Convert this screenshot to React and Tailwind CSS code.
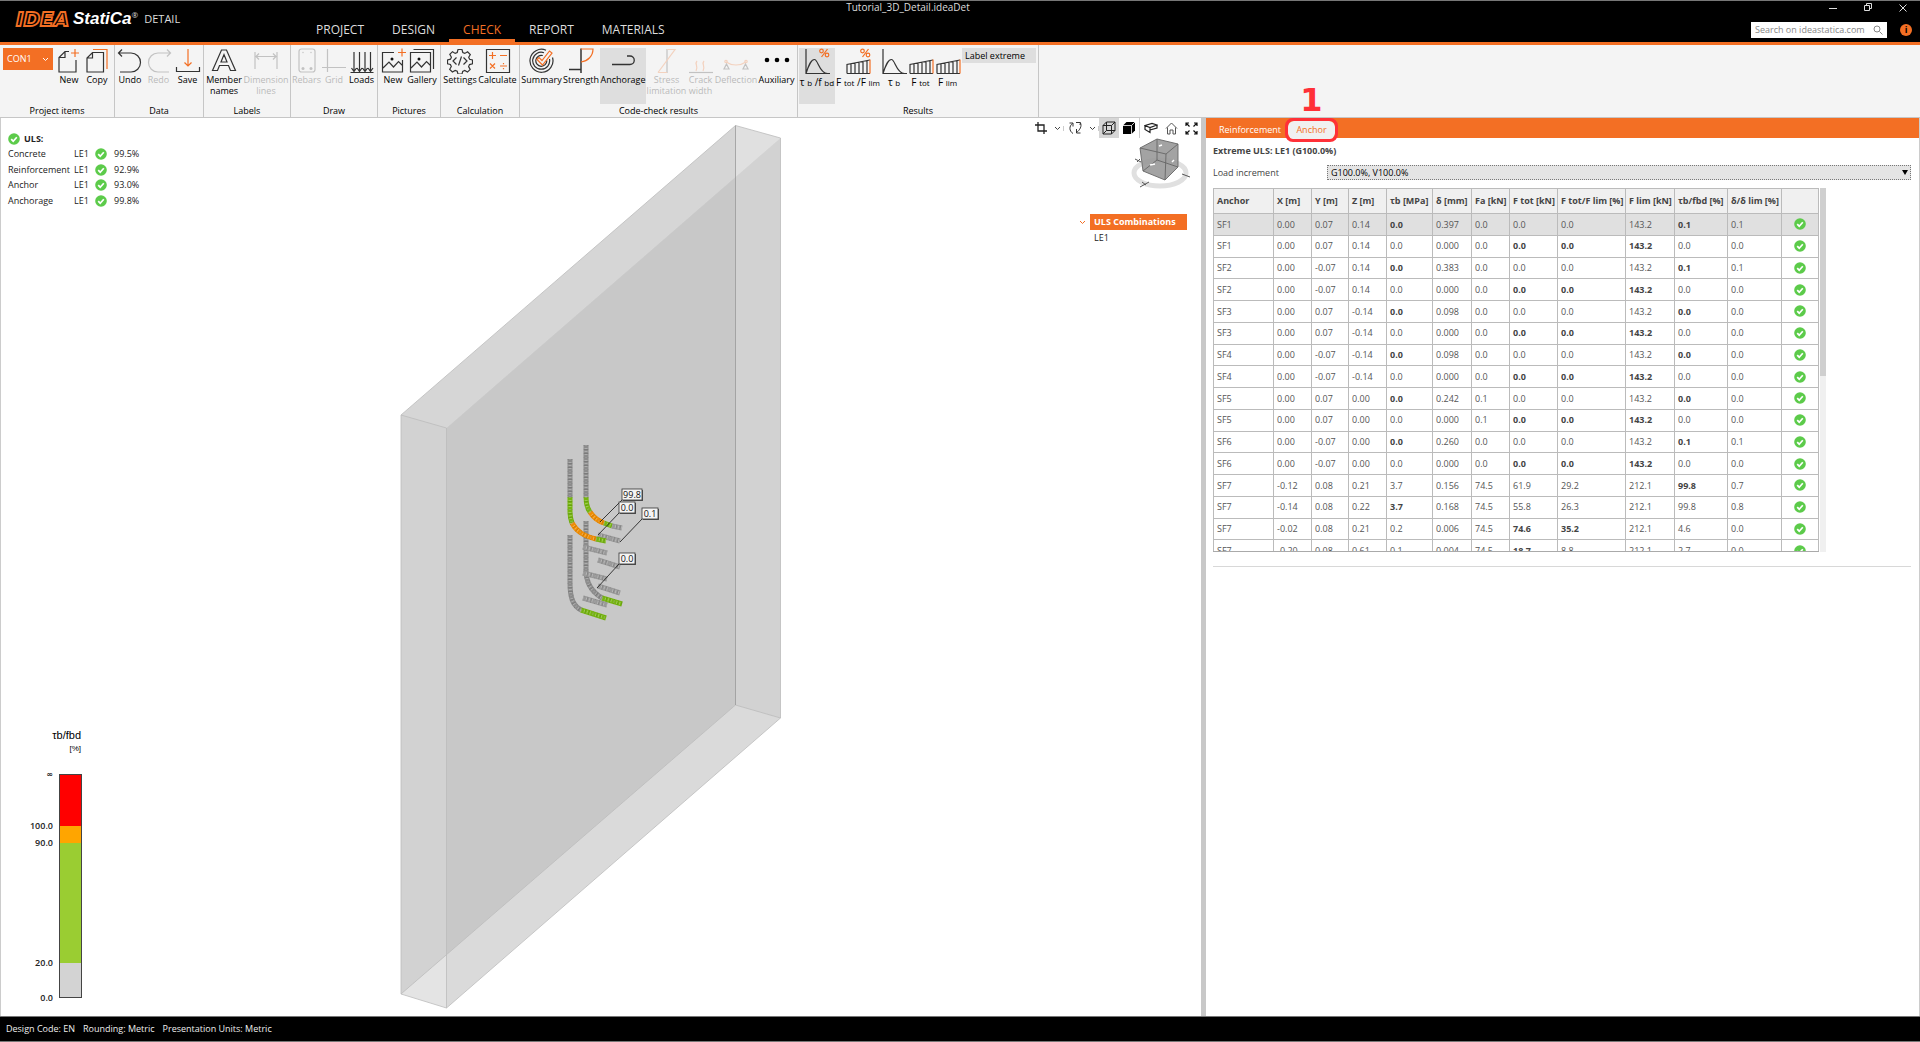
import React, { useState } from "react";

const ORANGE = "#f36f24";

const Icon = ({ children, w = 26, h = 26, className = "" }) => (
  <svg
    width={w}
    height={h}
    viewBox={`0 0 ${w} ${h}`}
    fill="none"
    stroke="#333"
    strokeWidth="1.2"
    aria-hidden="true"
    className={`shrink-0 ${className}`}
  >
    {children}
  </svg>
);

const icons = {
  newItem: (
    <Icon>
      <path d="M20 12v12H3V9.5L9 3.5h4M9 3.5v6H3" />
      <path d="M15 5h8M19 1v8" stroke={ORANGE} />
    </Icon>
  ),
  copy: (
    <Icon>
      <path d="M8.500 4.500h11v19.500H3V10zM8.500 4.500V10H3" />
      <path d="M9 1.500h14V21" stroke={ORANGE} />
    </Icon>
  ),
  undo: (
    <Icon>
      <path d="M1.500 5H14a9.500 9.500 0 0 1 0 19H3M5 1.500L1.500 5 5 8.500" />
    </Icon>
  ),
  redo: (
    <Icon>
      <path d="M24.500 5H12a9.500 9.500 0 0 0 0 19h11M21 1.500L24.500 5 21 8.500" />
    </Icon>
  ),
  save: (
    <Icon>
      <path d="M1.500 19v4.500h23V19" />
      <path d="M13 1v17M9.500 14.500L13 18l3.500-3.500" stroke={ORANGE} />
    </Icon>
  ),
  member: (
    <Icon>
      <path d="M1.500 22.500L10.500 2h5l9 20.500h-5l-2-5h-9l-2 5zM10 14h6l-3-7.500z" />
    </Icon>
  ),
  dimension: (
    <Icon>
      <path d="M2 4v17M24 4v17M3 8.500h20M6 5.500L3 8.500l3 3M20 5.500l3 3-3 3" />
    </Icon>
  ),
  rebars: (
    <Icon>
      <rect x="5" y="1" width="16" height="23" rx="2.500" />
      <g fill="#333" stroke="none">
        <circle cx="9" cy="20.500" r="1.500" />
        <circle cx="17" cy="20.500" r="1.500" />
        <circle cx="9" cy="4.500" r=".7" />
        <circle cx="17" cy="4.500" r=".7" />
      </g>
    </Icon>
  ),
  grid: (
    <Icon>
      <path d="M6.500 1v23M1 19.500h24" />
    </Icon>
  ),
  loads: (
    <Icon>
      <path d="M1.500 24.500h23M5 4v19M10.500 4v19M16 4v19M21.500 4v19M2.500 20L5 23.500 7.500 20M8 20l2.500 3.500L13 20M13.500 20l2.500 3.500 2.500-3.500M19 20l2.500 3.500L24 20" />
    </Icon>
  ),
  picture: (
    <Icon>
      <path d="M14 4.500H2.500V24h20V12M3 20l6-6 4.500 5 5-5.500 4 4" />
      <circle cx="12" cy="11" r="1.500" fill="#111" stroke="none" />
      <path d="M18 4.500h8M22 .5v8" stroke={ORANGE} />
    </Icon>
  ),
  gallery: (
    <Icon>
      <path d="M1.500 4.500h20V24h-20zM4.500 1.500h20V21M2 20l6-6 4.500 5 5-5.500 4 4" />
      <circle cx="10" cy="11" r="1.500" fill="#111" stroke="none" />
    </Icon>
  ),
  settings: (
    <Icon>
      <path d="M11 1.500h4l.8 3 2 .9 2.800-1.600 2.700 2.700-1.600 2.800.9 2 2.900.7v3.800l-3 .8-.9 2 1.600 2.800-2.700 2.700-2.800-1.600-2 .9-.7 2.700h-4l-.8-2.800-2-.9-2.800 1.600-2.700-2.700 1.600-2.800-.9-2-2.900-.7v-3.900l3-.7.9-2-1.600-2.800 2.700-2.700L8.200 5.400l2-.9z" />
      <path d="M9.500 9.500L6 13l3.500 3.500M16.500 9.500L20 13l-3.500 3.500M14.500 8.500l-3 9" />
    </Icon>
  ),
  calculate: (
    <Icon>
      <path d="M1.500 1.500h23v23h-23z" />
      <path d="M4 7.500h7M7.500 4v7M15 7.500h7M5 15.500l5 5M10 15.500l-5 5M15 18h7M18.500 15v1.200M18.500 20v1.200" stroke={ORANGE} />
    </Icon>
  ),
  summary: (
    <Icon>
      <path d="M23.500 9.500A11.500 11.500 0 1 1 17 2.200M20.500 11A8.500 8.500 0 1 1 15 4.700M17.800 12.500a5.500 5.500 0 1 1-4-5" />
      <path d="M8 11.500l2-2 3 3L20.500 3l2.500 2-9.500 12z" stroke={ORANGE} />
    </Icon>
  ),
  strength: (
    <Icon>
      <path d="M13 .5V25M1 21.500h12" strokeWidth="1.500" />
      <path d="M13 1h12c0 7-5 12-12 13" stroke={ORANGE} />
    </Icon>
  ),
  anchorage: (
    <Icon>
      <path d="M2 16.500h18a4 4 0 0 0 0-8.500h-3" strokeWidth="1.300" />
    </Icon>
  ),
  stress: (
    <Icon>
      <path d="M13 1v24" />
      <path d="M4 24.500L21 1.500H13M4 24.500h9" stroke={ORANGE} />
    </Icon>
  ),
  crack: (
    <Icon>
      <path d="M1 24.500h24" />
      <path d="M9 13c-3 3 2 5-1 10M16 13c-3 3 2 5-1 10" stroke={ORANGE} />
    </Icon>
  ),
  deflection: (
    <Icon>
      <path d="M1 21h5l-2.500-5zM20 21h5l-2.500-5z" />
      <path d="M3 14c6 4 14 4 20 0" stroke={ORANGE} />
      <circle cx="3" cy="13.500" r="1.200" stroke={ORANGE} />
      <circle cx="23" cy="13.500" r="1.200" stroke={ORANGE} />
    </Icon>
  ),
  auxiliary: (
    <Icon>
      <g fill="#000" stroke="none">
        <circle cx="3" cy="12" r="2.300" />
        <circle cx="13" cy="12" r="2.300" />
        <circle cx="23" cy="12" r="2.300" />
      </g>
    </Icon>
  ),
};

const Percent = () => (
  <g stroke={ORANGE}>
    <circle cx="17.500" cy="3" r="1.800" />
    <circle cx="23" cy="7" r="1.800" />
    <path d="M23.500 1l-6 8" />
  </g>
);

const CurveIcon = ({ percent }) => (
  <Icon>
    <path d="M2 1v24.500h24M2 25.500c3-9 5-14 8.500-14s5 14 13 14" />
    {percent && <Percent />}
  </Icon>
);

const BarsIcon = ({ percent }) => (
  <Icon>
    <path d="M2 25.500V16.500L25 12M2 25.500h23M6 25.500V16M10 25.500V15.200M14 25.500v-11M18 25.500V13.500M22 25.500V12.700" />
    <path d="M25 11.500v14" stroke={ORANGE} />
    {percent && <Percent />}
  </Icon>
);

const Sub = ({ children }) => <span className="text-[8px]">{children}</span>;

const groups = [
  {
    label: "Project items",
    cls: "w-[115px]",
    items: [
      { name: "New", icon: icons.newItem, cls: "w-7" },
      { name: "Copy", icon: icons.copy, cls: "w-7" },
    ],
  },
  {
    label: "Data",
    cls: "w-[89px]",
    items: [
      { name: "Undo", icon: icons.undo, cls: "w-7" },
      { name: "Redo", icon: icons.redo, cls: "w-[29px]", disabled: true },
      { name: "Save", icon: icons.save, cls: "w-[29px]" },
    ],
  },
  {
    label: "Labels",
    cls: "w-[87px]",
    items: [
      { name: "Member names", icon: icons.member, cls: "w-[38px]" },
      { name: "Dimension lines", icon: icons.dimension, cls: "w-[46px]", disabled: true },
    ],
  },
  {
    label: "Draw",
    cls: "w-[87px]",
    items: [
      { name: "Rebars", icon: icons.rebars, cls: "w-[29px]", disabled: true },
      { name: "Grid", icon: icons.grid, cls: "w-[26px]", disabled: true },
      { name: "Loads", icon: icons.loads, cls: "w-[29px]" },
    ],
  },
  {
    label: "Pictures",
    cls: "w-[63px]",
    items: [
      { name: "New", icon: icons.picture, cls: "w-7" },
      { name: "Gallery", icon: icons.gallery, cls: "w-[30px]" },
    ],
  },
  {
    label: "Calculation",
    cls: "w-[79px]",
    items: [
      { name: "Settings", icon: icons.settings, cls: "w-[36px]" },
      { name: "Calculate", icon: icons.calculate, cls: "w-[39px]" },
    ],
  },
  {
    label: "Code-check results",
    cls: "w-[278px]",
    items: [
      { name: "Summary", icon: icons.summary, cls: "w-[41px]" },
      { name: "Strength", icon: icons.strength, cls: "w-[38px]" },
      { name: "Anchorage", icon: icons.anchorage, cls: "w-[46px]", active: true },
      { name: "Stress limitation", icon: icons.stress, cls: "w-[41px]", disabled: true },
      { name: "Crack width", icon: icons.crack, cls: "w-[27px]", disabled: true },
      { name: "Deflection", icon: icons.deflection, cls: "w-[44px]", disabled: true },
      { name: "Auxiliary", icon: icons.auxiliary, cls: "w-[37px]" },
    ],
  },
];

const resultItems = [
  { id: "ratio", icon: <CurveIcon percent />, cls: "w-[36px]", active: true, label: <>τ <Sub>b</Sub> /f <Sub>bd</Sub></> },
  { id: "force", icon: <BarsIcon percent />, cls: "w-[46px]", label: <>F <Sub>tot</Sub> /F <Sub>lim</Sub></> },
  { id: "tau", icon: <CurveIcon />, cls: "w-[26px]", label: <>τ <Sub>b</Sub></> },
  { id: "ftot", icon: <BarsIcon />, cls: "w-[27px]", label: <>F <Sub>tot</Sub></> },
  { id: "flim", icon: <BarsIcon />, cls: "w-[27px]", label: <>F <Sub>lim</Sub></> },
];

const Check = () => (
  <svg width="12" height="12" viewBox="0 0 12 12" role="img" aria-label="OK" className="block">
    <circle cx="6" cy="6" r="5.800" fill="#5ccb4a" />
    <path d="M3.200 6.200l2 2 3.600-4" fill="none" stroke="#fff" strokeWidth="1.700" />
  </svg>
);

const Header = () => {
  const tabs = ["PROJECT", "DESIGN", "CHECK", "REPORT", "MATERIALS"];

  return (
    <header className="relative flex h-[45px] shrink-0 border-t border-t-[#777] border-b-[3px] border-b-[#f36f24] bg-black text-[#ddd]">
      <div className="absolute inset-x-0 top-0 flex h-3">
        <h1 className="flex-1 text-center text-[10px] leading-3">Tutorial_3D_Detail.ideaDet</h1>
        <div className="flex w-[104px] justify-between pl-3 pr-3">
          <button aria-label="Minimize">
            <svg width="10" height="10" stroke="#ddd"><path d="M1 6.500h8" /></svg>
          </button>
          <button aria-label="Restore">
            <svg width="10" height="10" fill="none" stroke="#ddd"><path d="M1.500 3.500h5v5h-5zM3.500 3.500v-2h5v5h-2" /></svg>
          </button>
          <button aria-label="Close">
            <svg width="10" height="10" stroke="#ddd"><path d="M1.500 2.500l7 7M8.500 2.500l-7 7" /></svg>
          </button>
        </div>
      </div>

      <div className="flex h-9 w-[302px] items-center pl-4">
        <svg width="57" height="28" viewBox="0 0 57 28" className="shrink-0 overflow-visible">
          <text
            x="0"
            y="21"
            fontFamily="DejaVu Sans"
            fontSize="20"
            fontWeight="700"
            fontStyle="italic"
            fill="#000"
            stroke={ORANGE}
            strokeWidth="1.800"
          >
            IDEA
          </text>
        </svg>
        <span className="font-['Liberation_Sans'] text-[17px] font-bold italic text-white">StatiCa</span>
        <sup className="text-[8px]">®</sup>
        <span className="ml-[6px] text-[11px]">DETAIL</span>
      </div>

      <nav className="flex items-end">
        {tabs.map((tab) => (
          <a
            key={tab}
            href={`#${tab.toLowerCase()}`}
            className={
              tab === "CHECK"
                ? "h-6 border-b-[3px] border-[#f36f24] px-[14px] text-[12px] leading-6 text-[#f36f24]"
                : "h-6 px-[14px] text-[12px] leading-6"
            }
          >
            {tab}
          </a>
        ))}
      </nav>

      <div className="ml-auto flex items-end gap-[13px] pr-2 pb-1">
        <label className="flex h-4 w-[136px] items-center bg-white px-1">
          <input
            type="text"
            aria-label="Search"
            placeholder="Search on ideastatica.com"
            className="w-full min-w-0 text-[9px] leading-4 text-black outline-none placeholder:text-[#888]"
          />
          <svg width="10" height="10" fill="none" stroke="#888" className="shrink-0">
            <circle cx="4" cy="4" r="3" />
            <path d="M6.500 6.500L9.500 9.500" />
          </svg>
        </label>
        <button className="mb-[2px] size-3 rounded-full bg-[#f36f24] text-[9px] font-bold leading-3 text-black">i</button>
      </div>
    </header>
  );
};

const RibbonItem = ({ item }) => (
  <button
    disabled={item.disabled}
    className={`flex h-14 shrink-0 flex-col items-center text-[9px] leading-[11px] ${item.cls} ${
      item.active ? "bg-[#dedede]" : ""
    } ${item.disabled ? "opacity-25" : ""}`}
  >
    {item.icon}
    <span>{item.name}</span>
  </button>
);

const Ribbon = () => (
  <div className="flex h-[73px] shrink-0 border-b border-[#c6c6c6] bg-[#f4f4f4] text-black">
    {groups.map((group, i) => (
      <section key={group.label} className={`flex shrink-0 flex-col border-r border-[#c6c6c6] pt-[3px] ${group.cls}`}>
        <div className="flex pl-px">
          {i === 0 && (
            <button className="mx-[2px] flex h-[22px] w-[50px] items-center justify-between bg-[#f36f24] px-1 text-[9px] text-white">
              CON1
              <svg width="7" height="5" fill="none" stroke="#fff"><path d="M1 1l2.500 2.500L6 1" /></svg>
            </button>
          )}
          {group.items.map((item) => (
            <RibbonItem key={item.name} item={item} />
          ))}
        </div>
        <h2 className="text-center text-[9px] leading-[13px]">{group.label}</h2>
      </section>
    ))}
    <section className="flex w-[241px] shrink-0 flex-col border-r border-[#c6c6c6] pt-[3px]">
      <div className="flex items-start pl-px">
        {resultItems.map((item) => (
          <button
            key={item.id}
            className={`flex h-14 shrink-0 flex-col items-center whitespace-nowrap text-[10px] leading-4 ${item.cls} ${
              item.active ? "bg-[#dedede]" : ""
            }`}
          >
            {item.icon}
            <span>{item.label}</span>
          </button>
        ))}
        <button className="ml-px h-[15px] w-[74px] bg-[#dedede] pl-[3px] text-left text-[9px]">Label extreme</button>
      </div>
      <h2 className="text-center text-[9px] leading-[13px]">Results</h2>
    </section>
  </div>
);

const checks = [
  ["Concrete", "99.5%"],
  ["Reinforcement", "92.9%"],
  ["Anchor", "93.0%"],
  ["Anchorage", "99.8%"],
];

// reinforcement bars: path and colour of each stressed segment
const bars = [
  ["M586 327V379", "#8c8c8c"],
  ["M586 379C586 386 587 390 590 394", "#76b510"],
  ["M590 394C594 400 598 403 604 405", "#f08c00"],
  ["M604 405L612 408", "#76b510"],
  ["M612 408L622 410", "#999"],
  ["M586 403V452C586 466 592 474 602 480", "#8c8c8c"],
  ["M602 480L622 486", "#76b510"],
  ["M598 417L620 423", "#999"],
  ["M583 429L607 435", "#999"],
  ["M598 442L620 449", "#999"],
  ["M583 455L607 461", "#999"],
  ["M598 468L620 475", "#999"],
  ["M583 480L607 487", "#999"],
  ["M570 341V379", "#8c8c8c"],
  ["M570 379V394C570 399 571 402 572 405", "#76b510"],
  ["M572 405C577 414 584 418 596 421", "#f08c00"],
  ["M596 421L606 423", "#76b510"],
  ["M570 417V465C570 482 574 488 581 492", "#8c8c8c"],
  ["M581 492L606 500", "#76b510"],
];

const callouts = [
  { x: 622, y: 371, w: 20, text: "99.8", line: "M622 382L600 404" },
  { x: 619, y: 384, w: 16, text: "0.0", line: "M619 395L598 417" },
  { x: 642, y: 390, w: 16, text: "0.1", line: "M642 401L620 424" },
  { x: 619, y: 435, w: 16, text: "0.0", line: "M619 446L597 470" },
];

const Scene = () => (
  <svg viewBox="1 0 1200 898" className="absolute inset-0 h-full w-full" role="img" aria-label="3D model">
    <g fill="#000">
      <path d="M401 297L735.500 7.500V587L401 876z" fillOpacity=".12" />
      <path d="M735.500 7.500L780.500 20V600L735.500 587z" fillOpacity=".08" />
      <path d="M401 297L446.500 310V890L401 876z" fillOpacity=".064" />
      <path d="M401 297L735.500 7.500L780.500 20L446.500 310z" fillOpacity=".042" />
      <path d="M401 876L735.500 587L780.500 600L446.500 890z" fillOpacity=".042" />
      <path d="M446.500 310L780.500 20V600L446.500 890z" fillOpacity=".105" />
    </g>
    <g fill="none" stroke="#bbb" strokeWidth=".8">
      <path d="M401 297L735.500 7.500L780.500 20V600L446.500 890L401 876zM401 297L446.500 310V890M735.500 587L780.500 600M401 876L735.500 587" />
      <path d="M735.500 7.500V587" stroke="#999" />
    </g>
    <g fill="none">
      {bars.map(([d, color]) => (
        <g key={d}>
          <path d={d} stroke={color} strokeWidth="5" />
          <path d={d} stroke="#fff" strokeOpacity=".3" strokeWidth="3" strokeDasharray="1 2" />
          <path d={d} stroke="#000" strokeOpacity=".12" strokeWidth="5" strokeDasharray="1 3" />
        </g>
      ))}
      {callouts.map((c) => (
        <path key={c.line} d={c.line} stroke="#111" strokeWidth=".8" />
      ))}
    </g>
    {callouts.map((c) => (
      <g key={c.line}>
        <rect x={c.x + 1} y={c.y + 1} width={c.w} height="11" fill="#555" />
        <rect x={c.x} y={c.y} width={c.w} height="11" fill="#f4f4f4" stroke="#333" strokeWidth=".8" />
        <text x={c.x + c.w / 2} y={c.y + 9} textAnchor="middle" fontSize="9" fill="#111">
          {c.text}
        </text>
      </g>
    ))}
  </svg>
);

const Legend = () => (
  <svg
    width="90"
    height="290"
    viewBox="1 0 90 290"
    className="absolute bottom-0 left-0"
    role="img"
    aria-label="Stress scale"
    fontSize="9"
    textAnchor="end"
  >
    <text x="81" y="13" fontSize="11" fontFamily="Liberation Sans">τb/fbd</text>
    <text x="81" y="25" fontSize="8" fontFamily="Liberation Sans">[%]</text>
    <rect x="59" y="48" width="23" height="52" fill="#f00" />
    <rect x="59" y="100" width="23" height="17" fill="#ffa500" />
    <rect x="59" y="117" width="23" height="120" fill="#9acd32" />
    <rect x="59" y="237" width="23" height="35" fill="#d3d3d3" />
    <rect x="59.500" y="48.500" width="22" height="223" fill="none" stroke="#444" />
    <g fontWeight="600" fill="#222">
      <text x="53" y="51" fontSize="8" fontFamily="DejaVu Sans">∞</text>
      <text x="53" y="103">100.0</text>
      <text x="53" y="120">90.0</text>
      <text x="53" y="240">20.0</text>
      <text x="53" y="275">0.0</text>
    </g>
  </svg>
);

const Chevron = ({ color = "#444" }) => (
  <svg width="7" height="5" fill="none" stroke={color} aria-hidden="true"><path d="M1 1l2.500 2.500L6 1" /></svg>
);

const ViewToolbar = () => (
  <div className="flex h-5 items-center">
    <button aria-label="Section" className="flex w-5 justify-center">
      <svg width="12" height="12" fill="none" stroke="#222" strokeWidth="1.300"><path d="M0 3h9v9M3 0v9h9" /></svg>
    </button>
    <button aria-label="Section options" className="flex w-[13px] justify-center border-r border-[#ccc]"><Chevron /></button>
    <button aria-label="Rotate" className="flex w-[22px] justify-center">
      <svg width="14" height="14" fill="none" stroke="#333">
        <path d="M5 12.500C1 10 1 5 4.500 2.500M1.500 2h3.500v3.500M8 1.500h4.500L12 4M12.500 2C14 5 12 9 8.500 11.500M8.500 8v4h4" />
      </svg>
    </button>
    <button aria-label="Rotate options" className="flex w-[13px] justify-center border-r border-[#ccc]"><Chevron /></button>
    <button aria-label="Wireframe" className="flex size-5 items-center justify-center bg-[#d6d6d6]">
      <svg width="14" height="14" fill="none" stroke="#222">
        <path d="M1 4.500h8.500V13H1zM4.500 1H13v8.500H4.500zM1 4.500L4.500 1M9.500 4.500L13 1M9.500 13L13 9.500M1 13l3.500-3.500" />
      </svg>
    </button>
    <button aria-label="Solid" className="flex h-5 w-[21px] items-center justify-center border-r border-[#ccc]">
      <svg width="14" height="14">
        <path d="M1 4.500L4.500 1H13v8.500L9.500 13H1z" fill="#000" />
        <path d="M1 4.500h8.500V13M9.500 4.500L13 1" fill="none" stroke="#fff" strokeWidth=".8" />
      </svg>
    </button>
    <button aria-label="Clip box" className="flex w-[22px] justify-center">
      <svg width="14" height="12" fill="none" stroke="#222" strokeWidth="1.200">
        <path d="M1 3.500L8 1.500l5 1.500-7 2.500zM1 3.500v4l5 3v-5M6 10.500V8L13 6V3" />
      </svg>
    </button>
    <button aria-label="Home" className="flex w-[19px] justify-center">
      <svg width="13" height="13" fill="none" stroke="#555">
        <path d="M1 6.500L6.500 1 12 6.500M2.500 5.500v6.500H5V8h3v4h2.500V5.500" />
      </svg>
    </button>
    <button aria-label="Fit" className="flex w-5 justify-center">
      <svg width="13" height="13" fill="none" stroke="#111" strokeWidth="1.200">
        <path d="M1 4V1h3M9 1h3v3M12 9v3H9M4 12H1V9M1 1l3.500 3.500M12 1L8.500 4.500M12 12L8.500 8.500M1 12l3.500-3.500" />
      </svg>
    </button>
  </div>
);

const NavCube = () => (
  <svg width="60" height="52" viewBox="0 0 60 52" className="mr-[10px]" role="img" aria-label="View cube">
    <ellipse cx="29" cy="35" rx="26" ry="13" fill="none" stroke="#e0e0e0" strokeWidth="5" />
    <path d="M9 10L26 1l21 5v23L34 42 12 33z" fill="#999" fillOpacity=".9" />
    <path d="M9 10l26 6 12-10M35 16l-1 26M26 1v21L12 33M26 22l21 7M9 10L26 1l21 5v23L34 42 12 33z" fill="none" stroke="#666" strokeWidth=".9" />
    <path d="M28 8l3-1M41 24l2-2M19 27l5-1" stroke="#fff" strokeWidth="1.500" />
    <path d="M4 21l6 3M6 24l3-3M9 49l9-5M11 44l4 3M51 36l8 3" stroke="#555" />
  </svg>
);

const Viewport = () => (
  <main className="relative min-w-0 overflow-hidden border-l border-[#ccc] bg-white">
    <Scene />
    <Legend />
    <div className="relative flex justify-between text-[9px] text-[#222]">
      <section className="pt-[13px] pl-[7px]">
        <h2 className="flex h-[15px] items-center gap-1 font-bold"><Check />ULS:</h2>
        <table className="h-[63px] leading-3">
          <tbody>
            {checks.map(([name, value]) => (
              <tr key={name}>
                <th scope="row" className="w-[66px] text-left font-normal">{name}</th>
                <td className="w-[21px]">LE1</td>
                <td className="w-[19px]"><Check /></td>
                <td>{value}</td>
              </tr>
            ))}
          </tbody>
        </table>
      </section>
      <aside className="flex flex-col items-end">
        <ViewToolbar />
        <NavCube />
        <ul className="mt-6 mr-[14px] w-[108px]">
          <li>
            <button className="flex w-full items-center gap-1">
              <Chevron color={ORANGE} />
              <span className="h-4 flex-1 bg-[#f36f24] pl-1 text-left font-bold leading-4 text-white">ULS Combinations</span>
            </button>
            <ul>
              <li><button className="pl-[15px] leading-4">LE1</button></li>
            </ul>
          </li>
        </ul>
      </aside>
    </div>
  </main>
);

const columns = [
  ["Anchor", "w-[60px]"],
  ["X [m]", "w-[38px]"],
  ["Y [m]", "w-[37px]"],
  ["Z [m]", "w-[38px]"],
  ["τb [MPa]", "w-[46px]"],
  ["δ [mm]", "w-[39px]"],
  ["Fa [kN]", "w-[38px]"],
  ["F tot [kN]", "w-[48px]"],
  ["F tot/F lim [%]", "w-[68px]"],
  ["F lim [kN]", "w-[49px]"],
  ["τb/fbd [%]", "w-[53px]"],
  ["δ/δ lim [%]", "w-[54px]"],
  ["", "w-[37px]"],
];

// a leading * marks an extreme value
const rows = [
  "SF1 0.00 0.07 0.14 *0.0 0.397 0.0 0.0 0.0 143.2 *0.1 0.1",
  "SF1 0.00 0.07 0.14 0.0 0.000 0.0 *0.0 *0.0 *143.2 0.0 0.0",
  "SF2 0.00 -0.07 0.14 *0.0 0.383 0.0 0.0 0.0 143.2 *0.1 0.1",
  "SF2 0.00 -0.07 0.14 0.0 0.000 0.0 *0.0 *0.0 *143.2 0.0 0.0",
  "SF3 0.00 0.07 -0.14 *0.0 0.098 0.0 0.0 0.0 143.2 *0.0 0.0",
  "SF3 0.00 0.07 -0.14 0.0 0.000 0.0 *0.0 *0.0 *143.2 0.0 0.0",
  "SF4 0.00 -0.07 -0.14 *0.0 0.098 0.0 0.0 0.0 143.2 *0.0 0.0",
  "SF4 0.00 -0.07 -0.14 0.0 0.000 0.0 *0.0 *0.0 *143.2 0.0 0.0",
  "SF5 0.00 0.07 0.00 *0.0 0.242 0.1 0.0 0.0 143.2 *0.0 0.0",
  "SF5 0.00 0.07 0.00 0.0 0.000 0.1 *0.0 *0.0 *143.2 0.0 0.0",
  "SF6 0.00 -0.07 0.00 *0.0 0.260 0.0 0.0 0.0 143.2 *0.1 0.1",
  "SF6 0.00 -0.07 0.00 0.0 0.000 0.0 *0.0 *0.0 *143.2 0.0 0.0",
  "SF7 -0.12 0.08 0.21 3.7 0.156 74.5 61.9 29.2 212.1 *99.8 0.7",
  "SF7 -0.14 0.08 0.22 *3.7 0.168 74.5 55.8 26.3 212.1 99.8 0.8",
  "SF7 -0.02 0.08 0.21 0.2 0.006 74.5 *74.6 *35.2 212.1 4.6 0.0",
  "SF7 -0.20 0.08 0.61 0.1 0.004 74.5 *18.7 8.8 212.1 2.7 0.0",
].map((row) => row.split(" "));

const AnchorTable = () => (
  <div className="mt-2 flex h-[364px] gap-px overflow-hidden">
    <div className="overflow-hidden border-b border-[#aaa]">
      <table className="h-[374px] w-[606px] table-fixed border-collapse text-[9px] text-[#555]">
        <thead>
          <tr className="h-[25px] bg-[#f0f0f0]">
            {columns.map(([name, width], i) => (
              <th key={i} className={`whitespace-nowrap border border-[#bbb] px-[3px] text-left font-bold text-[#444] ${width}`}>
                {name}
              </th>
            ))}
          </tr>
        </thead>
        <tbody>
          {rows.map((row, i) => (
            <tr key={i} className={i === 0 ? "bg-[#e0e0e0]" : "bg-white"}>
              {row.map((cell, j) => (
                <td
                  key={j}
                  className={`border border-[#bbb] px-[3px] ${cell.startsWith("*") ? "font-bold text-[#444]" : ""}`}
                >
                  {cell.replace("*", "")}
                </td>
              ))}
              <td className="border border-[#bbb] pl-[12px]"><Check /></td>
            </tr>
          ))}
        </tbody>
      </table>
    </div>
    <div className="w-[6px] bg-[#f0f0f0]">
      <div className="h-[188px] bg-[#cfcfcf]" />
    </div>
  </div>
);

const ResultsPanel = () => {
  const [increment, setIncrement] = useState("full");

  return (
    <aside className="min-w-0 border-r border-[#ccc] bg-white text-[9px] text-[#444]">
      <div className="flex h-5 items-start bg-[#f36f24] pl-[9px]">
        <button className="h-5 px-1 pt-[3px] text-white">Reinforcement</button>
        <div className="relative flex h-6 w-[53px]">
          <button className="m-[3px] h-[18px] flex-1 rounded-md bg-[#f0f0f0] leading-[18px] text-[#f36f24]">Anchor</button>
          {/* annotation */}
          <span className="pointer-events-none absolute inset-0 rounded-lg border-[3px] border-[#ff3038]" />
          <strong className="absolute bottom-full left-0 w-full text-center font-['DejaVu_Sans'] text-[32px] leading-9 text-[#ff3038]">
            1
          </strong>
        </div>
      </div>

      <div className="pr-2 pl-[7px]">
        <h2 className="pt-[7px] font-bold leading-3">Extreme ULS: LE1 (G100.0%)</h2>
        <div className="relative mt-2 flex h-[15px] items-center">
          <label htmlFor="increment" className="w-[114px]">Load increment</label>
          <select
            id="increment"
            value={increment}
            onChange={(e) => setIncrement(e.target.value)}
            className="h-[15px] flex-1 appearance-none bg-[#e4e4e4] px-1 leading-[15px] text-black outline-1 -outline-offset-1 outline-dotted outline-[#777]"
          >
            <option value="full">G100.0%, V100.0%</option>
          </select>
          <svg width="6" height="5" className="pointer-events-none absolute right-[3px]"><path d="M0 0h6L3 5z" /></svg>
        </div>
        <AnchorTable />
        <hr className="mt-[14px] border-[#d8d8d8]" />
      </div>
    </aside>
  );
};

export default function App() {
  return (
    <div className="flex h-screen flex-col overflow-hidden bg-white font-['Open_Sans',sans-serif]">
      <Header />
      <Ribbon />
      <div className="grid min-h-0 flex-1 grid-cols-[1201fr_5px_714fr]">
        <Viewport />
        <div className="bg-[#c8c8c8]" />
        <ResultsPanel />
      </div>
      <footer className="flex h-[26px] shrink-0 items-center gap-2 border-t border-b border-[#777] bg-black pl-[6px] text-[9px] text-[#eee]">
        <span>Design Code: <b className="font-medium">EN</b></span>
        <span>Rounding: <b className="font-medium">Metric</b></span>
        <span>Presentation Units: <b className="font-medium">Metric</b></span>
      </footer>
    </div>
  );
}
